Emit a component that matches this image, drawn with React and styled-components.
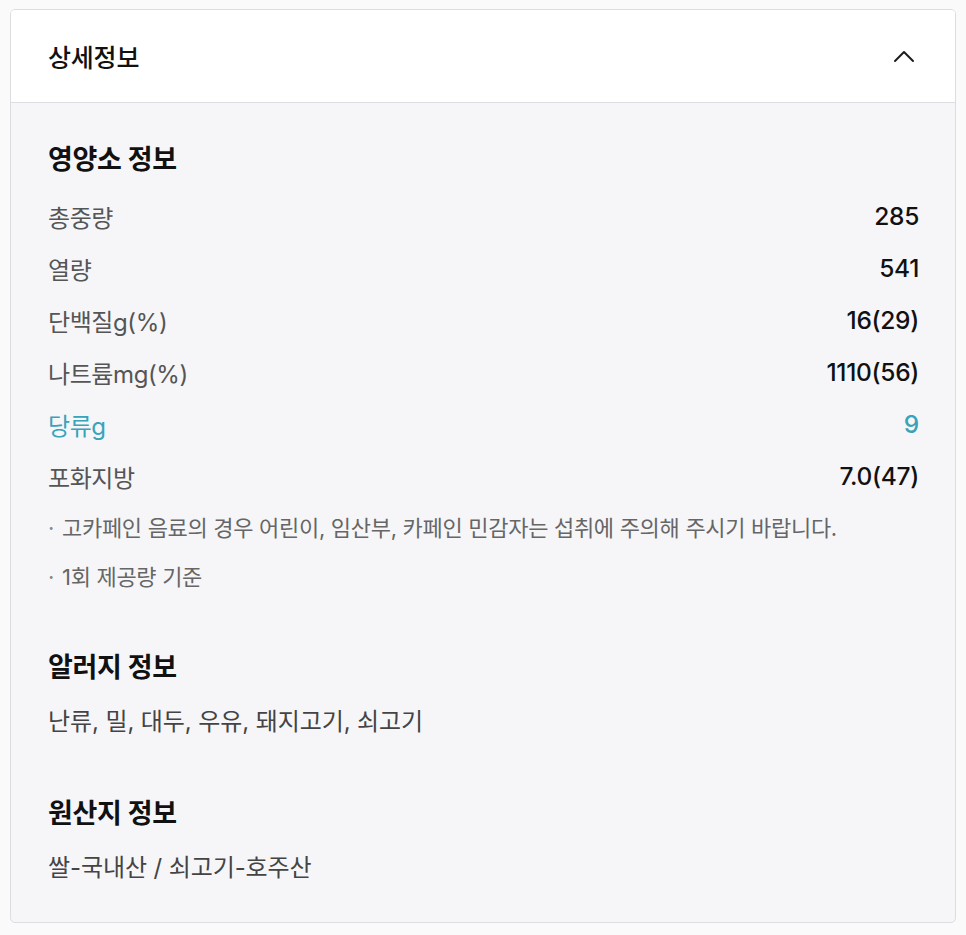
import React from "react";
import styled, { createGlobalStyle } from "styled-components";

const GlobalStyle = createGlobalStyle`
  html, body {
    margin: 0;
    padding: 0;
    background: #fafafa;
  }
  body {
    font-family: Inter, "Noto Sans CJK KR", sans-serif;
    -webkit-font-smoothing: antialiased;
  }
`;

const nutrition = [
  { label: "총중량", value: "285" },
  { label: "열량", value: "541" },
  { label: "단백질g(%)", value: "16(29)" },
  { label: "나트륨mg(%)", value: "1110(56)" },
  { label: "당류g", value: "9", accent: true },
  { label: "포화지방", value: "7.0(47)" },
];

const notes = [
  "고카페인 음료의 경우 어린이, 임산부, 카페인 민감자는 섭취에 주의해 주시기 바랍니다.",
  "1회 제공량 기준",
];

function ChevronUp() {
  return (
    <svg width="22" height="14" viewBox="0 0 22 14" fill="none">
      <path d="M2 12 L11 3 L20 12" stroke="#1e1e1e" strokeWidth="2" strokeLinecap="round" strokeLinejoin="round" />
    </svg>
  );
}

function App() {
  return (
    <>
      <GlobalStyle />
      <Page>
        <Card>
          <Header>
            <HeaderTitle>상세정보</HeaderTitle>
            <ToggleButton aria-label="접기">
              <ChevronUp />
            </ToggleButton>
          </Header>
          <Body>
            <Section>
              <SectionTitle>영양소 정보</SectionTitle>
              <Rows>
                {nutrition.map((row) => (
                  <Row key={row.label}>
                    <Label $accent={row.accent}>{row.label}</Label>
                    <Value $accent={row.accent}>{row.value}</Value>
                  </Row>
                ))}
              </Rows>
              <Notes>
                {notes.map((n) => (
                  <Note key={n}>{n}</Note>
                ))}
              </Notes>
            </Section>
            <Section $gap={50}>
              <SectionTitle>알러지 정보</SectionTitle>
              <Plain>난류, 밀, 대두, 우유, 돼지고기, 쇠고기</Plain>
            </Section>
            <Section $gap={60}>
              <SectionTitle>원산지 정보</SectionTitle>
              <Plain>쌀-국내산 / 쇠고기-호주산</Plain>
            </Section>
          </Body>
        </Card>
      </Page>
    </>
  );
}

export default App;

const Page = styled.div`
  padding: 9px 10px;
`;

const Card = styled.div`
  border: 1px solid #dcdde1;
  border-radius: 5px;
  overflow: hidden;
  background: #f6f6f9;
`;

const Header = styled.div`
  display: flex;
  align-items: center;
  justify-content: space-between;
  height: 92px;
  padding: 0 38px 0 37px;
  background: #fff;
  border-bottom: 1px solid #dcdde1;
`;

const HeaderTitle = styled.h2`
  margin: 0;
  font-size: 25px;
  font-weight: 500;
  letter-spacing: -0.2px;
  color: #111;
`;

const ToggleButton = styled.button`
  border: 0;
  padding: 0;
  background: none;
  display: flex;
  margin-right: 2px;
  cursor: pointer;
`;

const Body = styled.div`
  padding: 41px 36px 38px 37px;
`;

const Section = styled.section`
  margin-top: ${(p) => (p.$gap ? `${p.$gap}px` : "0")};
`;

const SectionTitle = styled.h3`
  margin: 0;
  font-size: 27px;
  line-height: 32px;
  font-weight: 700;
  letter-spacing: -0.3px;
  color: #111;
`;

const Rows = styled.div`
  margin-top: 14px;
`;

const Row = styled.div`
  display: flex;
  justify-content: space-between;
  align-items: center;
  height: 52px;
  font-size: 24px;
`;

const Label = styled.span`
  letter-spacing: -0.4px;
  color: ${(p) => (p.$accent ? "#38a3b9" : "#555")};
`;

const Value = styled.span`
  font-weight: 500;
  font-size: 24.5px;
  letter-spacing: -0.3px;
  color: ${(p) => (p.$accent ? "#38a3b9" : "#111")};
`;

const Notes = styled.ul`
  list-style: none;
  margin: 2px 0 0;
  padding: 0;
`;

const Note = styled.li`
  position: relative;
  padding-left: 14px;
  font-size: 22px;
  line-height: 49px;
  letter-spacing: -0.3px;
  color: #666;
  &::before {
    content: "·";
    position: absolute;
    left: 0;
    top: 0;
    color: #888;
  }
`;

const Plain = styled.p`
  margin: 22px 0 0;
  font-size: 24px;
  line-height: 32px;
  letter-spacing: -0.1px;
  color: #444;
`;
